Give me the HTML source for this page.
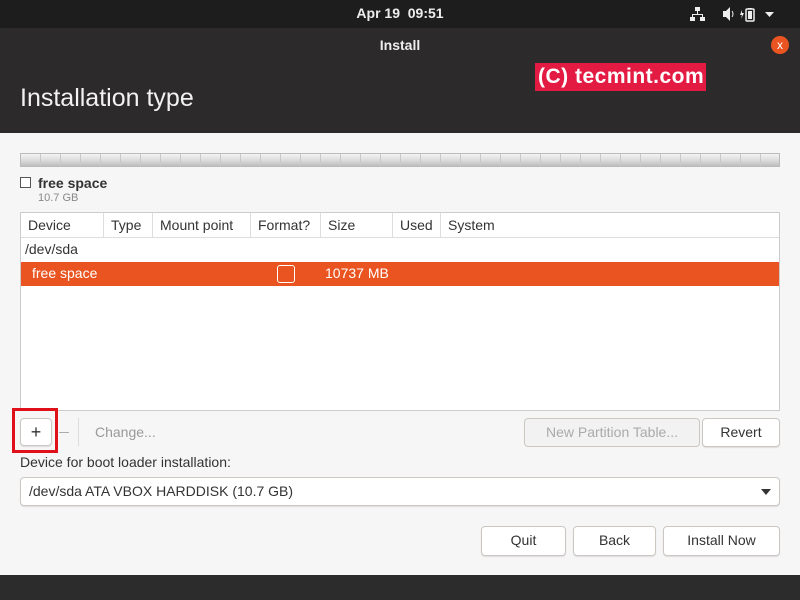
<!DOCTYPE html>
<html><head><style>
*{margin:0;padding:0;box-sizing:border-box}
body{width:800px;height:600px;overflow:hidden;background:#2c2c2c;font-family:"Liberation Sans",sans-serif;position:relative;color:#3c3c3c}
.a{position:absolute}
.btn{position:absolute;background:#fff;border:1px solid #cdc7c2;border-radius:4px;box-shadow:0 1px 1px rgba(0,0,0,.1);font-size:14px;color:#333;text-align:center;line-height:27px}
.th{position:absolute;top:0;height:25px;line-height:25px;font-size:14px;color:#333;padding-left:7px;border-right:1px solid #ddd}
</style></head><body>
<div class="a" style="left:0;top:0;width:800px;height:28px;background:#1d1d1d"></div>
<div class="a" style="left:0;top:5px;width:800px;text-align:center;color:#eee;font-size:14px;font-weight:bold">Apr 19&nbsp; 09:51</div>
<svg class="a" style="left:690px;top:6px" width="100" height="16">
<g fill="#eee"><rect x="5" y="1" width="5" height="4"/><rect x="7" y="5" width="1" height="3"/><rect x="2" y="8" width="11" height="1"/><rect x="2" y="8" width="1" height="3"/><rect x="12" y="8" width="1" height="3"/><rect x="0" y="11" width="5" height="4"/><rect x="10" y="11" width="5" height="4"/>
<path d="M33 5h3l4-4v14l-4-4h-3z"/><path d="M42 5q2 3 0 6" stroke="#eee" fill="none"/><rect x="58" y="2" width="4" height="1"/><rect x="56" y="3" width="8" height="12" rx="1" fill="none" stroke="#eee" stroke-width="1.5"/><rect x="58" y="5" width="4" height="8"/><path d="M52 4l-2 5h2l-1 4 3-6h-2z"/><path d="M75 6h9l-4.5 5z"/></g></svg>
<div class="a" style="left:0;top:28px;width:800px;height:105px;background:#2c2a2b;border-radius:8px 8px 0 0"></div>
<div class="a" style="left:0;top:37px;width:800px;text-align:center;color:#eee;font-size:14px;font-weight:bold">Install</div>
<div class="a" style="left:771px;top:36px;width:18px;height:18px;border-radius:50%;background:#e95420;color:#fff;font-size:12px;text-align:center;line-height:18px">x</div>
<div class="a" style="left:20px;top:84px;color:#f2f2f2;font-size:25px">Installation type</div>
<div class="a" style="left:535px;top:63px;width:171px;height:28px;background:#e31b42;color:#fff;font-weight:bold;font-size:21px;line-height:28px;padding-left:3px;letter-spacing:0.5px">(C) tecmint.com</div>
<div class="a" style="left:0;top:133px;width:800px;height:442px;background:#f6f6f7"></div>
<div class="a" style="left:20px;top:153px;width:760px;height:14px;border:1px solid #bbb;background-image:repeating-linear-gradient(90deg,transparent 0 19px,#c8c8c8 19px 20px),linear-gradient(#f4f4f4,#d8d8d8 60%,#bdbdbd)"></div>
<div class="a" style="left:20px;top:177px;width:11px;height:11px;border:1px solid #555;background:#fff"></div>
<div class="a" style="left:38px;top:175px;font-size:14px;font-weight:bold;color:#333">free space</div>
<div class="a" style="left:38px;top:192px;font-size:11px;color:#888">10.7 GB</div>
<div class="a" style="left:20px;top:212px;width:760px;height:199px;background:#fff;border:1px solid #ccc">
<div class="a" style="left:0;top:0;width:758px;height:25px;border-bottom:1px solid #ddd"></div>
<div class="th" style="left:0;width:83px">Device</div>
<div class="th" style="left:83px;width:49px">Type</div>
<div class="th" style="left:132px;width:98px">Mount point</div>
<div class="th" style="left:230px;width:70px">Format?</div>
<div class="th" style="left:300px;width:72px">Size</div>
<div class="th" style="left:372px;width:48px">Used</div>
<div class="th" style="left:420px;border:none">System</div>
<div class="a" style="left:4px;top:28px;font-size:14px;color:#333">/dev/sda</div>
<div class="a" style="left:0;top:49px;width:758px;height:24px;background:#e95420"></div>
<div class="a" style="left:11px;top:52px;font-size:14px;color:#fff">free space</div>
<div class="a" style="left:256px;top:52px;width:18px;height:18px;border:1px solid #fff;border-radius:3px"></div>
<div class="a" style="left:304px;top:52px;font-size:14px;color:#fff">10737 MB</div>
</div>
<div class="a" style="left:12px;top:408px;width:46px;height:45px;border:3px solid #e0101a"></div>
<div class="btn" style="left:20px;top:418px;width:32px;height:28px;font-size:18px">+</div>
<div class="a" style="left:59px;top:432px;width:10px;height:1px;background:#aaa"></div>
<div class="a" style="left:78px;top:418px;width:1px;height:28px;background:#ddd"></div>
<div class="a" style="left:95px;top:424px;font-size:14px;color:#999">Change...</div>
<div class="btn" style="left:524px;top:418px;width:176px;height:29px;background:#f2f2f2;color:#aaa;box-shadow:none">New Partition Table...</div>
<div class="btn" style="left:702px;top:418px;width:78px;height:29px">Revert</div>
<div class="a" style="left:20px;top:454px;font-size:14px;color:#333">Device for boot loader installation:</div>
<div class="btn" style="left:20px;top:477px;width:760px;height:29px;text-align:left;padding-left:8px">/dev/sda ATA VBOX HARDDISK (10.7 GB)</div>
<div class="a" style="left:761px;top:489px;border:5px solid transparent;border-top:6px solid #333;border-bottom:0"></div>
<div class="btn" style="left:481px;top:526px;width:85px;height:30px">Quit</div>
<div class="btn" style="left:573px;top:526px;width:83px;height:30px">Back</div>
<div class="btn" style="left:663px;top:526px;width:117px;height:30px">Install Now</div>
</body></html>
